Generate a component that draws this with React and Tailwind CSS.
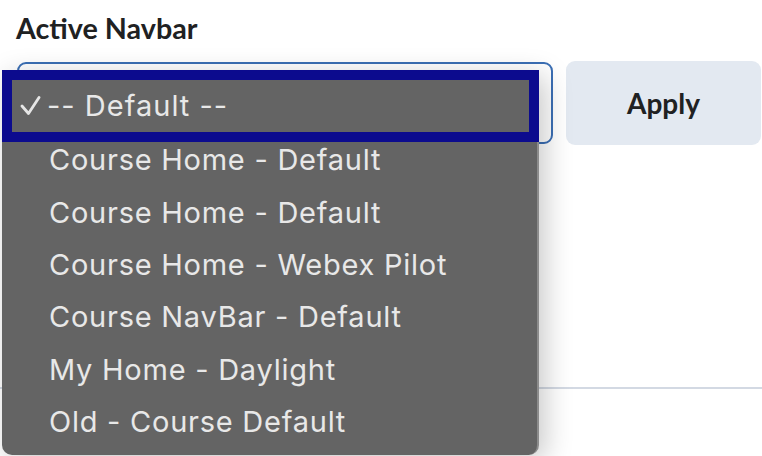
const options = [
  "Course Home - Default",
  "Course Home - Default",
  "Course Home - Webex Pilot",
  "Course NavBar - Default",
  "My Home - Daylight",
  "Old - Course Default",
];

function Check() {
  return (
    <svg width="21" height="20" viewBox="0 0 21 20" className="shrink-0">
      <polyline points="2,10 8.5,17.5 19,1.5" fill="none" stroke="#e6e6e6" strokeWidth="2.8" strokeLinecap="round" strokeLinejoin="round" />
    </svg>
  );
}

export default function App() {
  return (
    <div className="relative w-[762px] h-[456px] overflow-hidden bg-white" style={{ fontFamily: "Lato, 'Noto Sans', sans-serif" }}>
      <div className="pl-4 pt-[13px] text-[28.7px] leading-[30px] font-bold text-[#202122]">Active Navbar</div>

      <div className="flex items-center gap-[13px] pl-[17px] mt-[18px]">
        <div className="w-[536px] h-[82px] rounded-[9px] border-2 border-[#3b6fb5] bg-white" />
        <button className="w-[195px] h-[84px] rounded-[9px] bg-[#e3e9f1] text-[28px] font-bold text-[#202122]">Apply</button>
      </div>

      <div className="mt-[242px] border-t-2 border-[#d3d9e3]" />

      {/* native select menu */}
      <div
        className="absolute left-[2px] top-[70px] w-[537px] h-[385px] bg-[#646464] rounded-b-[10px] border-r-2 border-[#8c8c8c] shadow-[6px_6px_28px_rgba(0,0,0,0.22)] text-[#e8e8e8] tracking-[0.75px]"
        style={{ fontFamily: "Inter, 'Noto Sans', sans-serif" }}
      >
        <div className="relative z-10 h-[72px] -mb-[8px] border-[10px] border-[#0c0b8e] flex items-center pl-[8px] gap-[6px] text-[29px] -mr-[2px]">
          <Check />
          <span className="tracking-[1px]">-- Default --</span>
        </div>
        {options.map((o, i) => (
          <div key={i} className="h-[52.3px] flex items-center pl-[47px] text-[29px]">
            {o}
          </div>
        ))}
      </div>
    </div>
  );
}
